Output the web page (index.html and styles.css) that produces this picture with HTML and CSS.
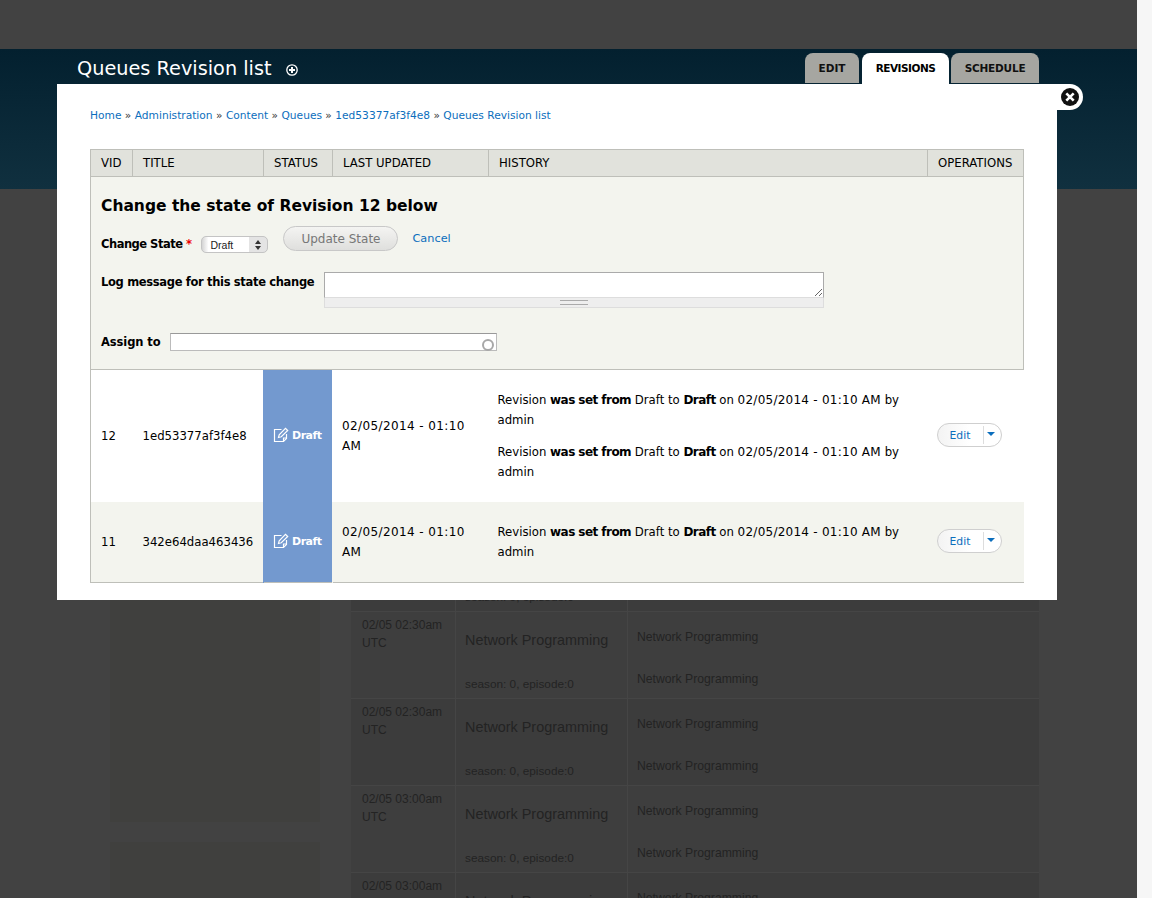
FILE: index.html
```html
<!DOCTYPE html>
<html lang="en">
<head>
<meta charset="utf-8">
<title>Queues Revision list</title>
<link rel="stylesheet" href="styles.css">
</head>
<body>
<div class="window">
  <div class="page">
    <div class="topbar"></div>
    <header class="banner">
      <h1 class="page-title">Queues Revision list <svg class="shortcut" viewBox="0 0 12 12" width="12" height="12"><circle cx="6" cy="6" r="5.2" fill="none" stroke="#fff" stroke-width="1.3"/><path d="M6 3v6M3 6h6" stroke="#fff" stroke-width="2"/></svg></h1>
      <nav class="tabs">
        <a class="tab tab-edit">EDIT</a>
        <a class="tab tab-active">REVISIONS</a>
        <a class="tab tab-schedule">SCHEDULE</a>
      </nav>
    </header>
    <div class="content">
      <aside class="sidebar">
        <div class="panel panel-first"></div>
        <div class="panel panel-second"></div>
      </aside>
      <div class="schedule">
        <div class="sched-row sched-alt"><div class="sc-time"></div><div class="sc-show"><div class="sc-name"></div><div class="sc-season">season: 0, episode:0</div></div><div class="sc-net"></div></div>
        <div class="sched-row"><div class="sc-time">02/05 02:30am<br>UTC</div><div class="sc-show"><div class="sc-name">Network Programming</div><div class="sc-season">season: 0, episode:0</div></div><div class="sc-net"><div>Network Programming</div><div>Network Programming</div></div></div>
        <div class="sched-row sched-alt"><div class="sc-time">02/05 02:30am<br>UTC</div><div class="sc-show"><div class="sc-name">Network Programming</div><div class="sc-season">season: 0, episode:0</div></div><div class="sc-net"><div>Network Programming</div><div>Network Programming</div></div></div>
        <div class="sched-row"><div class="sc-time">02/05 03:00am<br>UTC</div><div class="sc-show"><div class="sc-name">Network Programming</div><div class="sc-season">season: 0, episode:0</div></div><div class="sc-net"><div>Network Programming</div><div>Network Programming</div></div></div>
        <div class="sched-row sched-alt"><div class="sc-time">02/05 03:00am<br>UTC</div><div class="sc-show"><div class="sc-name">Network Programming</div><div class="sc-season">season: 0, episode:0</div></div><div class="sc-net"><div>Network Programming</div><div>Network Programming</div></div></div>
      </div>
    </div>
  </div>
  <div class="scrollbar"></div>

  <section class="modal">
    <a class="close"><svg viewBox="0 0 20 20" width="20" height="20"><circle cx="10" cy="10" r="9" fill="#111"/><path d="M6.300 6.300l7.400 7.400M13.700 6.300l-7.400 7.400" stroke="#fff" stroke-width="2.600"/></svg></a>
    <div class="crumbs"><a>Home</a> » <a>Administration</a> » <a>Content</a> » <a>Queues</a> » <a>1ed53377af3f4e8</a> » <a>Queues Revision list</a></div>
    <table class="revisions">
      <colgroup>
        <col class="c-vid"><col class="c-title"><col class="c-status"><col class="c-updated"><col class="c-history"><col class="c-ops">
      </colgroup>
      <thead>
        <tr><th>VID</th><th>TITLE</th><th>STATUS</th><th>LAST UPDATED</th><th>HISTORY</th><th>OPERATIONS</th></tr>
      </thead>
      <tbody>
        <tr class="form-row">
          <td colspan="6">
            <h2 class="form-title">Change the state of Revision 12 below</h2>
            <div class="state-line">
              <label class="flabel flabel-tight">Change State <span class="req">*</span></label>
              <span class="select-wrap"><select class="select"><option>Draft</option></select></span>
              <button class="update" type="button">Update State</button>
              <a class="cancel">Cancel</a>
            </div>
            <div class="log-line">
              <label class="flabel">Log message for this state change</label>
              <div class="log-field">
                <textarea class="log-text"></textarea>
                <div class="grippie"><span class="grip-mark"></span></div>
              </div>
            </div>
            <div class="assign-line">
              <label class="flabel flabel-wide">Assign to</label>
              <span class="assign-wrap"><input class="assign" type="text"><span class="throbber"></span></span>
            </div>
          </td>
        </tr>
        <tr class="rev rev-odd">
          <td>12</td><td>1ed53377af3f4e8</td>
          <td class="state"><svg class="note" viewBox="0 0 16 16" width="16" height="16"><path d="M8.500 2.500H1.500v12h9l3-3V7" fill="none" stroke="#fff" stroke-width="1.200"/><path d="M10.500 14v-3h3" fill="none" stroke="#fff" stroke-width="1.200"/><path d="M5.500 10.500l.7-2.700L12.500 1.300l2.200 2.200-6.400 6.300z" fill="none" stroke="#fff" stroke-width="1.200"/></svg><span>Draft</span></td>
          <td class="updated">02/05/2014 - 01:10 AM</td>
          <td class="hist">
            <p>Revision <b>was set from</b> Draft to <b>Draft</b> on <span class="stamp">02/05/2014 - 01:10 AM</span> by admin</p>
            <p>Revision <b>was set from</b> Draft to <b>Draft</b> on <span class="stamp">02/05/2014 - 01:10 AM</span> by admin</p>
          </td>
          <td class="ops"><span class="drop"><a class="drop-main">Edit</a><span class="drop-arrow"></span></span></td>
        </tr>
        <tr class="rev rev-even">
          <td>11</td><td>342e64daa463436</td>
          <td class="state"><svg class="note" viewBox="0 0 16 16" width="16" height="16"><path d="M8.500 2.500H1.500v12h9l3-3V7" fill="none" stroke="#fff" stroke-width="1.200"/><path d="M10.500 14v-3h3" fill="none" stroke="#fff" stroke-width="1.200"/><path d="M5.500 10.500l.7-2.700L12.500 1.300l2.200 2.200-6.400 6.300z" fill="none" stroke="#fff" stroke-width="1.200"/></svg><span>Draft</span></td>
          <td class="updated">02/05/2014 - 01:10 AM</td>
          <td class="hist">
            <p>Revision <b>was set from</b> Draft to <b>Draft</b> on <span class="stamp">02/05/2014 - 01:10 AM</span> by admin</p>
          </td>
          <td class="ops"><span class="drop"><a class="drop-main">Edit</a><span class="drop-arrow"></span></span></td>
        </tr>
      </tbody>
    </table>
  </section>
</div>
</body>
</html>
```
FILE: styles.css
```css
* { box-sizing: border-box; }
html, body { margin: 0; height: 100%; overflow: hidden; }
body { font-family: "DejaVu Sans", sans-serif; color: #000; background: #f6f6f6; }
a { color: #0b6ebd; text-decoration: none; }

.window { position: relative; display: flex; width: 1152px; height: 898px; overflow: hidden; }
.page { width: 1137px; height: 898px; background: #424242; overflow: hidden; flex: none; }
.scrollbar { flex: 1; background: #f6f6f6; }

.topbar { height: 49px; }
.banner { height: 140px; background: linear-gradient(#03202f, #10303f); display: flex; justify-content: space-between; align-items: flex-start; padding: 4px 98px 0 77px; }
.page-title { margin: 2px 0 0; font-size: 19.300px; line-height: 28px; font-weight: 400; color: #fff; display: flex; align-items: center; gap: 14px; white-space: nowrap; }
.shortcut { margin-top: 1px; }
.tabs { display: flex; gap: 3px; }
.tab { height: 30px; padding-top: 9px; text-align: center; font-size: 10.500px; font-weight: 700; color: #101010; background: #a6a6a1; border-radius: 8px 8px 0 0; }
.tab-edit { width: 54px; }
.tab-active { width: 87px; height: 31px; background: #fff; color: #000; letter-spacing: -0.5px; }
.tab-schedule { width: 88px; margin-left: -1px; letter-spacing: -0.2px; }

.content { display: flex; padding-left: 110px; height: 709px; }
.sidebar { width: 210px; flex: none; display: flex; flex-direction: column; gap: 20px; padding-top: 21px; }
.panel { background: #40403e; }
.panel-first { height: 612px; }
.panel-second { flex: 1; }
.schedule { width: 688px; margin-left: 31px; padding-top: 335px; font-family: "Liberation Sans", sans-serif; color: #232323; }
.sched-row { display: flex; height: 87px; background: #3e3e3e; border-top: 1px solid #454545; }
.sched-alt { background: #3c3c3c; }
.sc-time { width: 104px; padding: 4px 11px; font-size: 12px; line-height: 18px; }
.sc-show { width: 172px; padding: 0 9px; border-left: 1px solid #454545; display: flex; flex-direction: column; }
.sc-name { margin-top: 19px; height: 18px; font-size: 14.400px; line-height: 18px; }
.sc-season { margin-top: 27px; font-size: 11.800px; line-height: 16px; }
.sc-net { flex: 1; padding: 17px 9px 0; border-left: 1px solid #454545; font-size: 12.200px; line-height: 16px; display: flex; flex-direction: column; gap: 26px; }

.modal { position: absolute; left: 57px; top: 84px; width: 1000px; height: 516px; background: #fff; padding: 25px 33px 0; }
.close { position: absolute; left: 1000px; top: 0; width: 26px; height: 26px; background: #fff; border-radius: 0 13px 13px 0; display: flex; align-items: center; padding-left: 3px; }
.crumbs { font-size: 10.650px; line-height: 13px; height: 40px; color: #333; white-space: nowrap; }

.revisions { width: 933px; border-collapse: collapse; table-layout: fixed; font-size: 11.700px; }
.c-vid { width: 42px; }
.c-title { width: 131px; }
.c-status { width: 69px; }
.c-updated { width: 156px; }
.c-history { width: 439px; }
.c-ops { width: 96px; }
.revisions th { height: 27px; padding: 0 10px; background: #e1e2dc; border: 1px solid #bebfb9; font-size: 11.700px; font-weight: 400; text-align: left; white-space: nowrap; }
.revisions td { padding: 0 10px; }
.form-row td { height: 193px; padding: 0 10px; vertical-align: top; background: #f3f4ee; border: 1px solid #bebfb9; }
.form-title { margin: 17px 0 0; font-size: 15.500px; line-height: 24px; font-weight: 700; white-space: nowrap; }
.flabel { font-size: 11.500px; font-weight: 700; letter-spacing: -0.33px; white-space: nowrap; }
.flabel-tight { letter-spacing: -0.5px; }
.flabel-wide { letter-spacing: -0.1px; }
.req { color: #e00; }
.state-line { display: flex; align-items: flex-start; margin-top: 8px; height: 33px; }
.state-line .flabel { line-height: 16px; margin-top: 10px; }
.select-wrap { position: relative; margin: 10px 0 0 10px; width: 67px; height: 17px; }
.select-wrap::before { content: ""; position: absolute; left: 54px; top: 3.500px; border: 3px solid transparent; border-top: 0; border-bottom: 4px solid #333; pointer-events: none; }
.select-wrap::after { content: ""; position: absolute; left: 54px; top: 9.500px; border: 3px solid transparent; border-bottom: 0; border-top: 4px solid #333; pointer-events: none; }
.select { appearance: none; display: block; width: 67px; height: 17px; margin: 0; padding: 0 0 0 8px; font: 10.500px "Liberation Sans", sans-serif; color: #222; border: 1px solid #c4c4c4; border-radius: 5px; background: linear-gradient(90deg, #d4d4d4, #fff 10%, #fff 72%, #e4e4e4 73%, #e4e4e4); }
.update { margin: 0 0 0 15px; width: 115px; height: 25px; padding: 0; font: 12px "DejaVu Sans", sans-serif; color: #777; border: 1px solid #c8c8c8; border-radius: 13px; background: linear-gradient(#f4f4f2, #dfdfdd); }
.cancel { margin: 5px 0 0 14px; font-size: 11.300px; line-height: 16px; }
.log-line { display: flex; margin-top: 13px; height: 61px; }
.log-line .flabel { line-height: 18px; margin: 1px 10px 0 0; }
.log-field { width: 500px; }
.log-text { display: block; width: 500px; height: 26px; margin: 0; padding: 0; border: 1px solid #aaa; border-bottom-color: #ddd; background: #fff; resize: vertical; outline: 0; }
.grippie { height: 10px; background: #eee; border: 1px solid #ddd; border-top: 0; display: flex; justify-content: center; align-items: center; }
.grip-mark { width: 28px; height: 5px; border-top: 1px solid #aaa; border-bottom: 1px solid #aaa; position: relative; }
.assign-line { display: flex; align-items: center; height: 18px; }
.assign-wrap { position: relative; margin-left: 10px; }
.assign { display: block; width: 327px; height: 18px; margin: 0; padding: 0; border: 1px solid #bbb; border-top-color: #999; background: #fff; outline: 0; }
.throbber { position: absolute; right: 3px; top: 6px; width: 12px; height: 12px; border: 2px solid #a8a8a8; border-radius: 50%; }

.rev td { vertical-align: middle; line-height: 20px; }
.rev-odd td { height: 132px; background: #fff; }
.rev-even td { height: 81px; background: #f3f4ee; }
.rev-even { border-bottom: 1px solid #bebfb9; }
.rev td:first-child { border-left: 1px solid #bebfb9; }
.revisions .state { background: #7399cf; border-left: 1px solid #7399cf; color: #fff; font-weight: 700; font-size: 11px; letter-spacing: -0.5px; padding: 0 0 0 9px; white-space: nowrap; }
.note { vertical-align: -4px; margin-right: 3px; }
.revisions .updated { font-size: 12px; letter-spacing: 0.39px; padding-left: 9px; }
.rev-odd .updated { border-left: 1px solid #fff; }
.rev-even .updated { border-left: 1px solid #f3f4ee; }
.revisions .hist { padding-left: 9px; padding-right: 10px; font-size: 11.700px; }
.hist b { font-size: 12px; letter-spacing: -0.55px; }
.stamp { font-size: 12px; letter-spacing: 0.25px; }
.hist p { margin: 0; }
.hist p + p { margin-top: 12px; }
.revisions .ops { padding-left: 9px; }
.drop { display: flex; width: 65px; height: 24px; margin-bottom: 2px; border: 1px solid #cfcfcf; border-radius: 12px; background: linear-gradient(90deg, #f3f3f3, #fff 50%); overflow: hidden; }
.drop-main { width: 45px; text-align: center; font-size: 10.800px; line-height: 23px; }
.drop-arrow { flex: 1; position: relative; }
.drop-arrow::before { content: ""; position: absolute; left: 0; top: 2px; height: 18px; border-left: 1px solid #ddd; }
.drop-arrow::after { content: ""; position: absolute; left: 4px; top: 8px; border: 4px solid transparent; border-bottom: 0; border-top: 4px solid #0b6ebd; }
```
